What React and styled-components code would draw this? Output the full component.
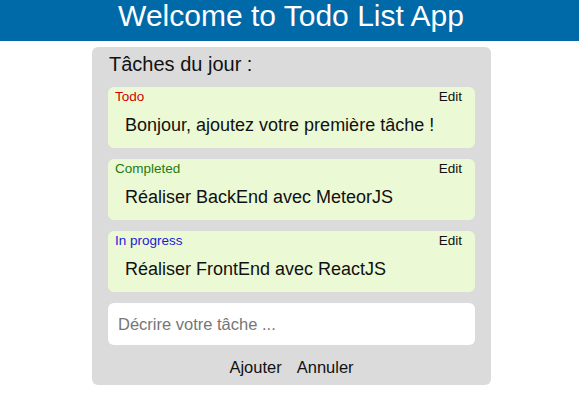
import React from "react";
import styled, { createGlobalStyle } from "styled-components";

const GlobalStyle = createGlobalStyle`
  html, body {
    margin: 0;
    padding: 0;
    background: #ffffff;
    font-family: "Liberation Sans", Arial, sans-serif;
    color: #111111;
  }
`;

const Header = styled.header`
  background: #0069a8;
  height: 41px;
  padding-left: 3px;
  box-sizing: border-box;
`;

const Title = styled.h1`
  margin: 0;
  font-size: 30px;
  font-weight: 400;
  line-height: 31px;
  color: #ffffff;
  text-align: center;
`;

const Main = styled.main`
  padding-left: 4px;
`;

const Panel = styled.section`
  width: 399px;
  margin: 6px auto 0;
  box-sizing: border-box;
  background: #dbdbdb;
  border-radius: 6px;
  padding: 6px 16px 8px;
  display: flex;
  flex-direction: column;
`;

const Heading = styled.h2`
  margin: 0 0 12px 1px;
  font-size: 20px;
  font-weight: 400;
  line-height: 22px;
  color: #111111;
`;

const List = styled.div`
  display: flex;
  flex-direction: column;
  gap: 11px;
`;

const Card = styled.div`
  background: #ebfad4;
  border-radius: 6px;
  padding: 2px 13px 12px 7px;
  display: flex;
  flex-direction: column;
`;

const CardTop = styled.div`
  display: flex;
  justify-content: space-between;
  align-items: baseline;
  height: 16px;
`;

const Status = styled.span`
  font-size: 13.5px;
  line-height: 16px;
  color: ${(p) => p.$color};
`;

const EditButton = styled.button`
  border: none;
  background: none;
  padding: 0;
  font-family: inherit;
  font-size: 13.5px;
  line-height: 16px;
  color: #111111;
  cursor: pointer;
`;

const TaskText = styled.p`
  margin: 10px 0 0 10px;
  font-size: 18px;
  line-height: 21px;
  color: #111111;
`;

const Input = styled.input`
  margin-top: 11px;
  height: 42px;
  box-sizing: border-box;
  border: none;
  border-radius: 6px;
  background: #ffffff;
  padding: 0 10px;
  font-family: inherit;
  font-size: 16.5px;
  color: #111111;
  outline: none;
  &::placeholder {
    color: #767676;
  }
`;

const Actions = styled.div`
  margin-top: 13px;
  display: flex;
  justify-content: center;
  gap: 15px;
`;

const ActionButton = styled.button`
  border: none;
  background: none;
  padding: 0;
  font-family: inherit;
  font-size: 16.5px;
  line-height: 19px;
  color: #111111;
  cursor: pointer;
`;

const tasks = [
  { status: "Todo", color: "#d40000", text: "Bonjour, ajoutez votre première tâche !" },
  { status: "Completed", color: "#1f7a12", text: "Réaliser BackEnd avec MeteorJS" },
  { status: "In progress", color: "#1a1ad6", text: "Réaliser FrontEnd avec ReactJS" },
];

export default function App() {
  return (
    <>
      <GlobalStyle />
      <Header>
        <Title>Welcome to Todo List App</Title>
      </Header>
      <Main>
        <Panel>
          <Heading>Tâches du jour :</Heading>
          <List>
            {tasks.map((t) => (
              <Card key={t.text}>
                <CardTop>
                  <Status $color={t.color}>{t.status}</Status>
                  <EditButton>Edit</EditButton>
                </CardTop>
                <TaskText>{t.text}</TaskText>
              </Card>
            ))}
          </List>
          <Input placeholder="Décrire votre tâche ..." />
          <Actions>
            <ActionButton>Ajouter</ActionButton>
            <ActionButton>Annuler</ActionButton>
          </Actions>
        </Panel>
      </Main>
    </>
  );
}
